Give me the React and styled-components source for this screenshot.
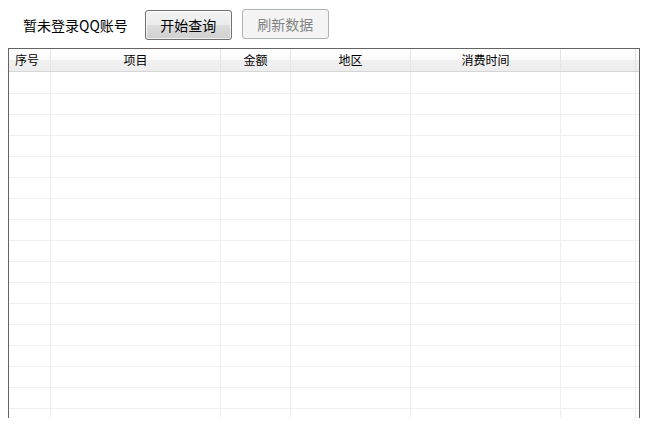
import styled, { createGlobalStyle } from "styled-components";

const GlobalStyle = createGlobalStyle`
  html, body {
    margin: 0;
    padding: 0;
    background: #ffffff;
    font-family: "Noto Sans CJK SC", "Noto Sans", sans-serif;
  }
`;

const Page = styled.div`
  width: 649px;
  height: 434px;
  overflow: hidden;
  background: #fff;
`;

const Toolbar = styled.div`
  height: 48px;
  box-sizing: border-box;
  padding: 9px 0 0 23px;
  display: flex;
  align-items: flex-start;
`;

const Status = styled.span`
  font-size: 14px;
  color: #000;
  line-height: 30px;
  margin-top: 1px;
  margin-right: 17px;
  white-space: nowrap;
`;

const Button = styled.button`
  width: 87px;
  height: 30px;
  margin-right: 10px;
  margin-top: ${(p) => (p.disabled ? "0" : "1px")};
  padding: 0;
  box-sizing: border-box;
  font-family: inherit;
  font-size: 14px;
  border-radius: 3px;
  border: 1px solid ${(p) => (p.disabled ? "#adb2b5" : "#707070")};
  color: ${(p) => (p.disabled ? "#838383" : "#000")};
  background: ${(p) =>
    p.disabled
      ? "#f4f4f4"
      : "linear-gradient(to bottom, #f2f2f2 0%, #ebebeb 50%, #dddddd 51%, #cfcfcf 100%)"};
  box-shadow: ${(p) => (p.disabled ? "none" : "inset 0 0 0 1px rgba(255,255,255,0.7)")};
`;

const Table = styled.div`
  margin-left: 8px;
  width: 632px;
  height: 370px;
  box-sizing: border-box;
  border: 1px solid #646464;
  border-bottom: none;
  overflow: hidden;
`;

const cols = "42px 170px 70px 120px 150px 75px 3px";

const HeaderRow = styled.div`
  display: grid;
  grid-template-columns: ${cols};
  height: 23px;
  box-sizing: border-box;
  border-bottom: 1px solid #d5d5d5;
  background: linear-gradient(to bottom, #ffffff 0%, #fafafa 50%, #f0f0f0 51%, #ededed 100%);
`;

const HeadCell = styled.div`
  font-size: 12px;
  line-height: 22px;
  color: #000;
  text-align: ${(p) => p.$align || "center"};
  padding-left: ${(p) => (p.$align === "left" ? "6px" : "0")};
  border-right: 1px solid ${(p) => (p.$last ? "transparent" : "#e3e3e3")};
  white-space: nowrap;
  overflow: hidden;
`;

const Row = styled.div`
  display: grid;
  grid-template-columns: ${cols};
  height: ${(p) => (p.$first ? "22px" : "21px")};
  box-sizing: border-box;
  border-bottom: 1px solid #f0f0f0;
`;

const Cell = styled.div`
  border-right: 1px solid ${(p) => (p.$last ? "transparent" : "#f0f0f0")};
`;

const headers = [
  { label: "序号", align: "left" },
  { label: "项目" },
  { label: "金额" },
  { label: "地区" },
  { label: "消费时间" },
  { label: "" },
  { label: "", last: true },
];

export default function App() {
  const rows = Array.from({ length: 18 }, (_, i) => i);

  return (
    <Page>
      <GlobalStyle />
      <Toolbar>
        <Status>暂未登录QQ账号</Status>
        <Button>开始查询</Button>
        <Button disabled>刷新数据</Button>
      </Toolbar>
      <Table>
        <HeaderRow>
          {headers.map((h, idx) => (
            <HeadCell key={idx} $align={h.align} $last={h.last}>
              {h.label}
            </HeadCell>
          ))}
        </HeaderRow>
        {rows.map((r) => (
          <Row key={r} $first={r === 0}>
            {headers.map((h, idx) => (
              <Cell key={idx} $last={h.last} />
            ))}
          </Row>
        ))}
      </Table>
    </Page>
  );
}
